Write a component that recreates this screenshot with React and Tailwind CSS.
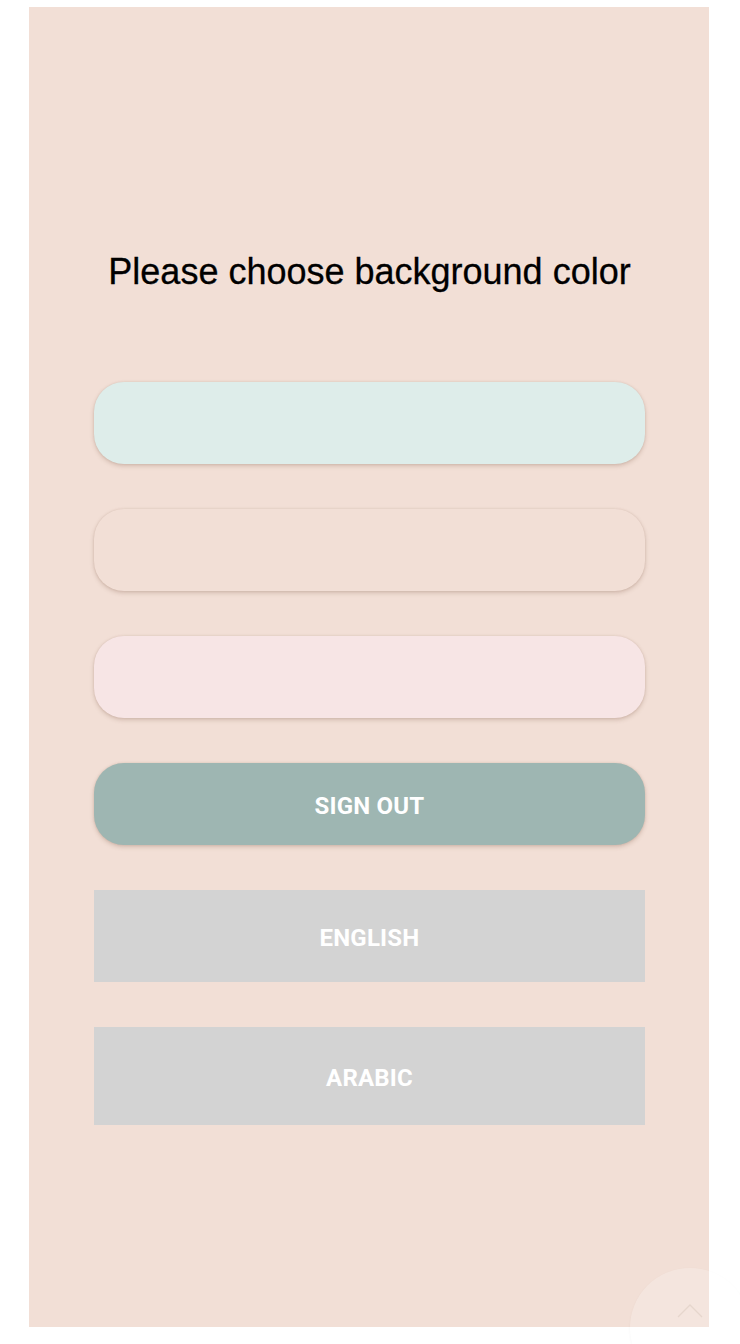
export default function App() {
  const pill = "h-[82px] w-full rounded-[30px] shadow-[0_2px_4px_rgba(120,80,60,0.25),0_0_2px_rgba(120,80,60,0.15)]";
  const label = "pt-[3px] text-[24px] font-bold tracking-[0.2px] text-white";
  return (
    <div className="relative min-h-[1344px] w-[740px] overflow-hidden bg-white">
      <div className="ml-[29px] mt-[7px] flex h-[1320px] w-[680px] flex-col items-stretch bg-[#f2dfd6] pl-[65px] pr-[64px] pt-[245px]">
        <h1 className="text-center text-[36px] leading-[40px] text-black [-webkit-text-stroke:0.3px_black]" style={{ fontFamily: '"Liberation Sans", Arial, sans-serif' }}>
          Please choose background color
        </h1>
        <div className="mt-[90px] flex flex-col gap-[45px]" style={{ fontFamily: 'Roboto, "Noto Sans", sans-serif' }}>
          <button className={`${pill} bg-[#deedea]`} />
          <button className={`${pill} bg-[#f2dfd6]`} />
          <button className={`${pill} bg-[#f7e5e5]`} />
          <button className={`${pill} bg-[#9eb6b2] ${label}`}>SIGN OUT</button>
          <button className={`h-[92px] w-full bg-[#d3d3d3] ${label}`}>ENGLISH</button>
          <button className={`h-[98px] w-full bg-[#d3d3d3] ${label}`}>ARABIC</button>
        </div>
      </div>
      <div className="absolute left-[630px] top-[1268px] flex h-[120px] w-[120px] items-start justify-center rounded-full bg-white/20 shadow-[0_1px_3px_rgba(0,0,0,0.04)]">
        <svg width="26" height="14" viewBox="0 0 26 14" className="ml-[-1px] mt-[36px]" fill="none">
          <path d="M1 13 L13 1 L25 13" stroke="#e6d6cd" strokeWidth="1.3" />
        </svg>
      </div>
    </div>
  );
}
